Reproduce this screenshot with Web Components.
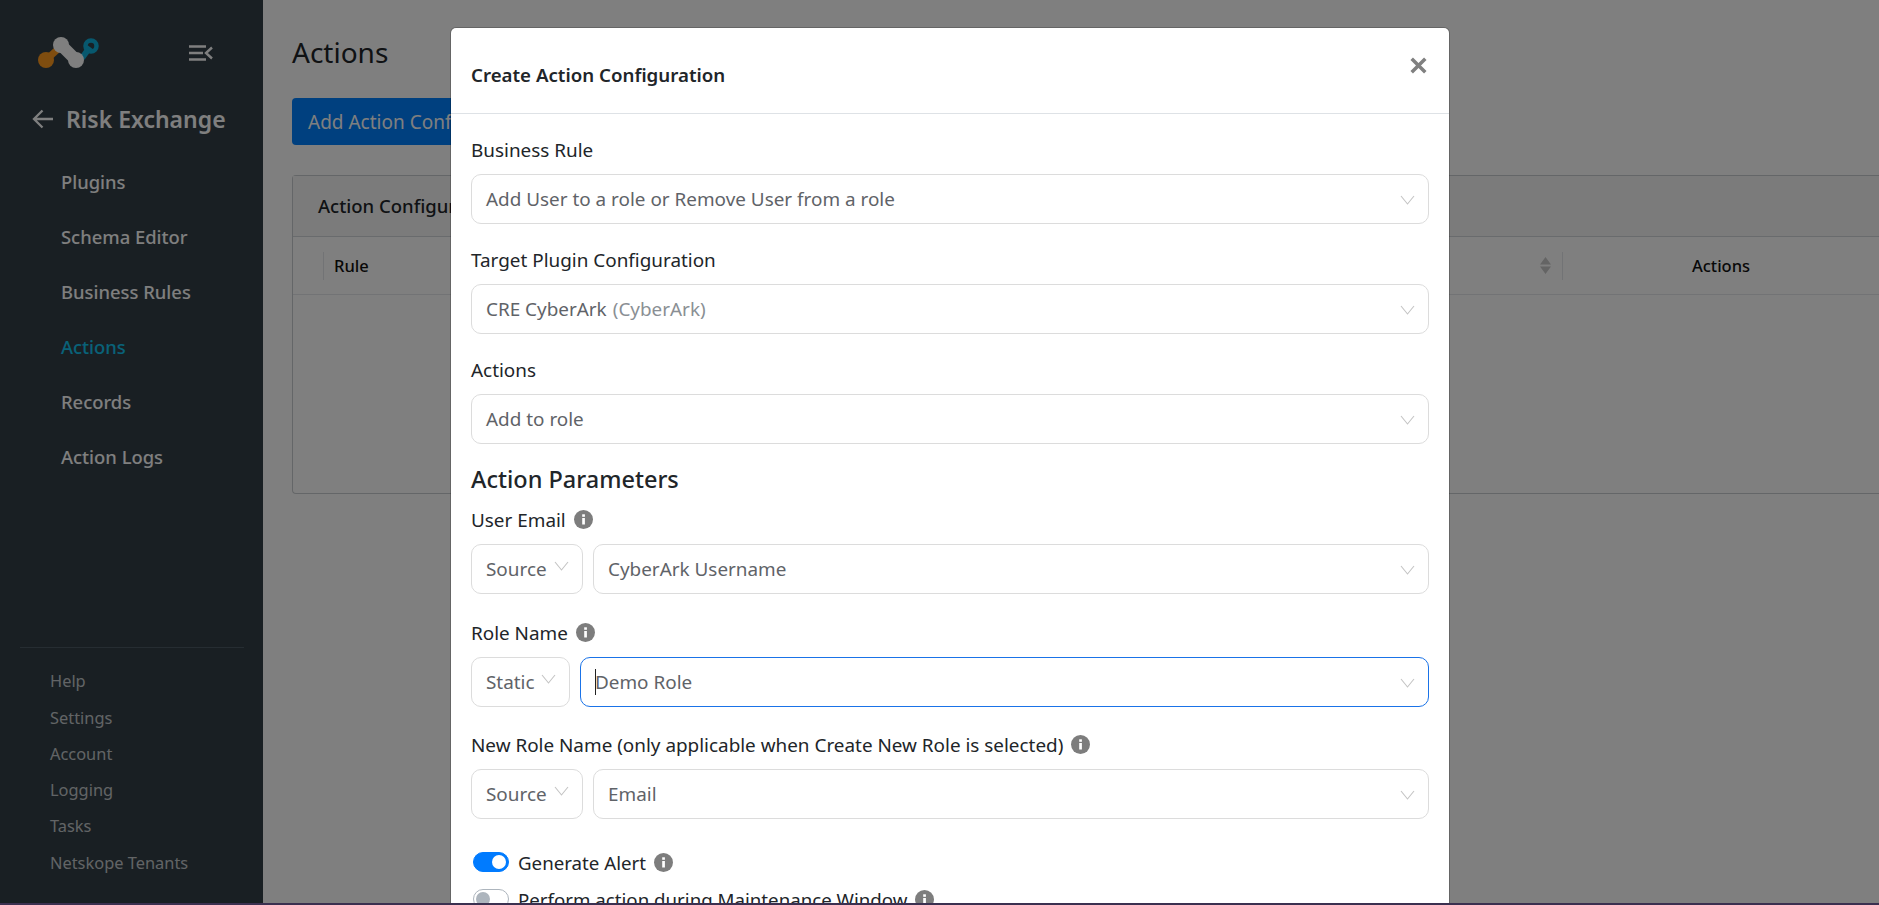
<!DOCTYPE html>
<html><head><meta charset="utf-8">
<style>
html,body{margin:0;padding:0;height:100%;overflow:hidden}
body{font-family:"Noto Sans","Open Sans",sans-serif;background:#fff}
</style></head><body>
<app-shell></app-shell>
<script>
const FONT='"Noto Sans","Open Sans",sans-serif';
class NavSidebar extends HTMLElement{constructor(){super();this.attachShadow({mode:'open'}).innerHTML=`<style>
:host{display:flex;flex-direction:column;width:263px;flex:none;background:#333f47;height:903px;box-sizing:border-box;font-family:${FONT}}
.top{display:flex;align-items:center;height:36px;margin-top:35px;padding-left:38px;box-sizing:border-box}
.tog{margin-left:89px}
.title{display:flex;align-items:center;margin:28px 0 0 32px;color:#fff;font-size:23px;font-weight:600;height:40px;white-space:nowrap}
.title svg{margin-right:13px}
nav{display:flex;flex-direction:column;margin-top:15px;padding-left:61px}
nav a{color:#fff;font-size:18.4px;font-weight:500;height:55px;line-height:55px}
nav a.on{color:#12c4f0}
.sp{flex:1}
hr{border:0;border-top:1px solid #4d5b64;margin:0 19px 0 20px}
.b{display:flex;flex-direction:column;padding:15px 0 22px 50px}
.b a{color:#c4c9cc;font-size:16.4px;height:36.3px;line-height:36.3px}
</style>
<div class="top"><svg width="61" height="34" viewBox="38 36 61 34"><path d="M46 60 L58 49" stroke="#ff9a1f" stroke-width="7"/><circle cx="46" cy="60" r="8" fill="#ff9a1f"/><path d="M82 58 L90 47" stroke="#0fb0dc" stroke-width="6"/><circle cx="91" cy="46" r="5.500" fill="none" stroke="#0fb0dc" stroke-width="4.500"/><path d="M61 45 L76 60" stroke="#fff" stroke-width="12"/><circle cx="61" cy="45" r="8" fill="#fff"/><circle cx="76" cy="60" r="8" fill="#fff"/></svg>
<svg class="tog" width="25" height="18" viewBox="0 0 25 18"><path d="M1 2.500H18M1 9H15M1 15.500H18" stroke="#fff" stroke-width="2.500"/><path d="M24 3.500 18 9l6 5.500" stroke="#fff" stroke-width="2.400" fill="none"/></svg></div>
<div class="title"><svg width="21" height="20" viewBox="0 0 21 20"><path d="M21 10H2M10.500 1.500 2 10l8.500 8.500" stroke="#fff" stroke-width="2.300" fill="none"/></svg>Risk Exchange</div>
<nav><a>Plugins</a><a>Schema Editor</a><a>Business Rules</a><a class="on">Actions</a><a>Records</a><a>Action Logs</a></nav>
<div class="sp"></div><hr>
<div class="b"><a>Help</a><a>Settings</a><a>Account</a><a>Logging</a><a>Tasks</a><a>Netskope Tenants</a></div>`}}
customElements.define('nav-sidebar',NavSidebar);

class PageContent extends HTMLElement{constructor(){super();this.attachShadow({mode:'open'}).innerHTML=`<style>
:host{display:block;flex:1;min-width:0;padding:0 0 0 29px;box-sizing:border-box;font-family:${FONT};color:#212529;overflow:hidden}
h1{font-size:28px;font-weight:400;margin:0;padding-top:31px;height:98px;box-sizing:border-box;line-height:42px}
button{display:block;background:#0080ff;color:#fff;border:0;border-radius:4px;height:47px;width:400px;font:400 19px ${FONT};text-align:left;padding:0 16px;margin-top:0}
.card{margin-top:30px;border:1px solid #c9cdd1;border-right:0;border-radius:4px 0 0 4px;height:319px;box-sizing:border-box}
.head{height:61px;line-height:59px;background:#f7f7f7;border-bottom:1px solid #d3d7db;font-size:18.5px;font-weight:500;padding-left:25px;box-sizing:border-box}
.row{height:58px;border-bottom:1px solid #e5e7ea;display:flex;align-items:center;font-size:16.5px;font-weight:500;color:#111;box-sizing:border-box}
.row .r{margin-left:30px;border-left:1px solid #e5e7ea;padding-left:10px;height:28px;line-height:28px}
.row .a{width:317px;box-sizing:border-box;text-align:center;height:28px;line-height:28px;border-left:1px solid #e5e7ea}
.sort{margin-left:auto;margin-right:11px}
</style>
<h1>Actions</h1><button>Add Action Configuration</button>
<div class="card"><div class="head">Action Configurations</div>
<div class="row"><span class="r">Rule</span><svg class="sort" width="11" height="17" viewBox="0 0 11 17"><path d="M5.500 0 11 7.500H0zM5.500 17 0 9.500H11z" fill="#c8c8c8"/></svg><span class="a">Actions</span></div></div>`}}
customElements.define('page-content',PageContent);

class SelectBox extends HTMLElement{
constructor(){super();this.attachShadow({mode:'open'}).innerHTML=`<style>
:host{display:block;box-sizing:border-box;height:50px;border:1px solid #dcdcdc;border-radius:10px;background:#fff;color:#5f6368;font-size:18.9px;position:relative;flex:1;min-width:0}
:host([narrow]){flex:none;width:112px}
:host([narrow2]){flex:none;width:99px}
:host([focus]){border-color:#1a73e8}
.t{display:flex;align-items:center;height:100%;padding-left:14px;white-space:nowrap}
svg{position:absolute;right:13px;top:20px}
:host([narrow]) svg,:host([narrow2]) svg{top:16px}
.caret{position:absolute;left:14px;top:11px;width:1px;height:26px;background:#222}
</style><div class="t"><slot></slot></div><svg width="15" height="10" viewBox="0 0 15 10"><path d="M1 1l6.500 8L14 1" fill="none" stroke="#c4c4c4" stroke-width="1.100"/></svg>`;
}
connectedCallback(){if(this.hasAttribute('focus')&&!this.shadowRoot.querySelector('.caret')){const c=document.createElement('div');c.className='caret';this.shadowRoot.appendChild(c)}}}
customElements.define('select-box',SelectBox);

class FormField extends HTMLElement{constructor(){super();this.attachShadow({mode:'open'}).innerHTML=`<style>
:host{display:block}
.l{display:flex;align-items:center;font-size:18.9px;color:#212529;height:27px;margin-bottom:11px;white-space:nowrap}
.row{display:flex;gap:10px}
</style><div class="l"><slot name="label"></slot></div><div class="row"><slot></slot></div>`}}
customElements.define('form-field',FormField);

class InfoIcon extends HTMLElement{constructor(){super();this.attachShadow({mode:'open'}).innerHTML=`<style>:host{display:inline-flex;margin-left:8px}</style><svg width="19" height="19" viewBox="0 0 19 19"><circle cx="9.500" cy="9.500" r="9.500" fill="#7d7d7d"/><rect x="8.200" y="8" width="2.700" height="6.500" fill="#fff"/><rect x="8.200" y="4.300" width="2.700" height="2.500" fill="#fff"/></svg>`}}
customElements.define('info-icon',InfoIcon);

class ToggleRow extends HTMLElement{constructor(){super();this.attachShadow({mode:'open'}).innerHTML=`<style>
:host{display:flex;align-items:center;font-size:18.7px;color:#212529;height:24px;padding-left:2px;white-space:nowrap}
.sw{width:36px;height:20px;border-radius:10px;box-sizing:border-box;border:1px solid #adb5bd;background:#fff;position:relative;margin-right:9px;flex:none}
.sw::after{content:"";position:absolute;left:2px;top:2px;width:14px;height:14px;border-radius:50%;background:#adb5bd}
:host([on]) .sw{background:#007bff;border-color:#007bff}
:host([on]) .sw::after{left:18px;background:#fff}
</style><span class="sw"></span><slot></slot>`}}
customElements.define('toggle-row',ToggleRow);

class ActionModal extends HTMLElement{constructor(){super();this.attachShadow({mode:'open'}).innerHTML=`<style>
:host{display:block;position:absolute;left:451px;top:28px;width:998px;height:1000px;background:#fff;border-radius:5px;box-shadow:0 0 0 1px rgba(0,0,0,.2);box-sizing:border-box;font-family:${FONT};color:#212529}
header{display:flex;align-items:center;justify-content:space-between;height:86px;box-sizing:border-box;border-bottom:1px solid #dee2e6;padding:0 20px}
h5{margin:7px 0 0;font-size:18.7px;font-weight:600}
.x{width:19px;height:19px;margin-bottom:10px;margin-right:1px}
.body{padding:22px 20px 0 20px;display:flex;flex-direction:column}
</style>
<header><h5>Create Action Configuration</h5><svg class="x" viewBox="0 0 14 14"><path d="M2 2l10 10M12 2 2 12" stroke="#808080" stroke-width="2.600"/></svg></header>
<div class="body"><slot></slot></div>`}}
customElements.define('action-modal',ActionModal);

class AppShell extends HTMLElement{constructor(){super();this.attachShadow({mode:'open'}).innerHTML=`<style>
:host{display:block;position:relative;width:1879px;height:905px;overflow:hidden;background:#fff}
.wrap{display:flex;height:903px}
.back{position:absolute;inset:0 0 2px 0;background:rgba(0,0,0,.5)}
.strip{position:absolute;left:0;right:0;bottom:0;height:2px;background:#3b3050;z-index:5}
.gap{height:var(--h)}
.muted{color:#8a8f94;margin-left:6px}
.lab{display:flex;align-items:center}
.sec{font-size:23.5px;font-weight:500;height:36px;line-height:36px;margin:17px 0 9px}
</style>
<div class="wrap"><nav-sidebar></nav-sidebar><page-content></page-content></div>
<div class="back"></div>
<action-modal>
<form-field><span slot="label">Business Rule</span><select-box>Add User to a role or Remove User from a role</select-box></form-field>
<div class="gap" style="--h:22px"></div>
<form-field><span slot="label">Target Plugin Configuration</span><select-box>CRE CyberArk <span class="muted">(CyberArk)</span></select-box></form-field>
<div class="gap" style="--h:22px"></div>
<form-field><span slot="label">Actions</span><select-box>Add to role</select-box></form-field>
<div class="sec">Action Parameters</div>
<form-field><span slot="label" class="lab">User Email<info-icon></info-icon></span><select-box narrow>Source</select-box><select-box>CyberArk Username</select-box></form-field>
<div class="gap" style="--h:25px"></div>
<form-field><span slot="label" class="lab">Role Name<info-icon></info-icon></span><select-box narrow2>Static</select-box><select-box focus>Demo Role</select-box></form-field>
<div class="gap" style="--h:24px"></div>
<form-field><span slot="label" class="lab">New Role Name (only applicable when Create New Role is selected)<info-icon></info-icon></span><select-box narrow>Source</select-box><select-box>Email</select-box></form-field>
<div class="gap" style="--h:31px"></div>
<toggle-row on>Generate Alert<info-icon></info-icon></toggle-row>
<div class="gap" style="--h:13px"></div>
<toggle-row>Perform action during Maintenance Window<info-icon></info-icon></toggle-row>
</action-modal>
<div class="strip"></div>`}}
customElements.define('app-shell',AppShell);
</script>
</body></html>
